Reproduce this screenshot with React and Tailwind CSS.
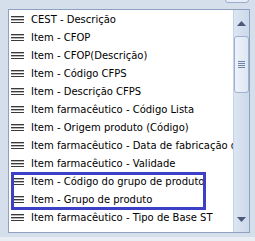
const items = [
  'CEST - Descrição',
  'Item - CFOP',
  'Item - CFOP(Descrição)',
  'Item - Código CFPS',
  'Item - Descrição CFPS',
  'Item farmacêutico - Código Lista',
  'Item - Origem produto (Código)',
  'Item farmacêutico - Data de fabricação do',
  'Item farmacêutico - Validade',
  'Item - Código do grupo de produto',
  'Item - Grupo de produto',
  'Item farmacêutico - Tipo de Base ST',
]

function Lines() {
  return (
    <svg width="13" height="7" viewBox="0 0 13 7" className="shrink-0">
      <rect x="0" y="0" width="13" height="1" fill="#3a3a3a" />
      <rect x="0" y="1" width="13" height="1" fill="#b8b8b8" />
      <rect x="0" y="3" width="13" height="1" fill="#3a3a3a" />
      <rect x="0" y="4" width="13" height="1" fill="#b8b8b8" />
      <rect x="0" y="6" width="13" height="1" fill="#3a3a3a" />
    </svg>
  )
}

export default function App() {
  return (
    <div className="relative w-[255px] h-[241px] overflow-hidden bg-[#d5dfec] pl-[8px] pt-[9px]" style={{ fontFamily: '"DejaVu Sans", sans-serif' }}>
      <div className="absolute right-[6px] top-[-10px] h-[13px] w-[24px] rounded-[3px] border border-[#9aaccb] bg-[#e6edf6]" />
      <div className="flex w-[242px] h-[224px] border border-[#8ea1c1] bg-white">
        <div className="flex-1 overflow-hidden">
          {items.map((t) => (
            <div key={t} className="flex h-[18px] items-center gap-[7px] pl-[2px] whitespace-nowrap text-[10px] text-black">
              <Lines />
              <span>{t}</span>
            </div>
          ))}
        </div>
        <div className="flex w-[16px] flex-col items-center border-l border-[#c5d3e6] bg-gradient-to-r from-[#dce6f3] to-[#ccd9ea]">
          <div className="flex h-[26px] w-full items-center justify-center">
            <svg width="9" height="5" viewBox="0 0 9 5"><path d="M4.5 0L9 5H0z" fill="#4c5878" /></svg>
          </div>
          <div className="flex h-[57px] w-[15px] items-center justify-center rounded-[3px] border border-[#9db0cd] bg-gradient-to-r from-[#eef3fa] to-[#dde6f2]">
            <div className="flex flex-col gap-[1px]">
              <div className="h-[1px] w-[7px] bg-[#6f83a8]" />
              <div className="h-[1px] w-[7px] bg-[#6f83a8]" />
              <div className="h-[1px] w-[7px] bg-[#6f83a8]" />
              <div className="h-[1px] w-[7px] bg-[#6f83a8]" />
            </div>
          </div>
          <div className="flex-1" />
          <div className="flex h-[26px] w-full items-center justify-center">
            <svg width="9" height="5" viewBox="0 0 9 5"><path d="M0 0H9L4.5 5z" fill="#4c5878" /></svg>
          </div>
        </div>
      </div>
      <div className="absolute left-[11px] top-[172px] h-[38px] w-[195px] border-[3px] border-[#3b40c6]" />
      <div className="absolute bottom-0 left-0 h-[4px] w-full bg-[#e9eef5]" />
    </div>
  )
}
